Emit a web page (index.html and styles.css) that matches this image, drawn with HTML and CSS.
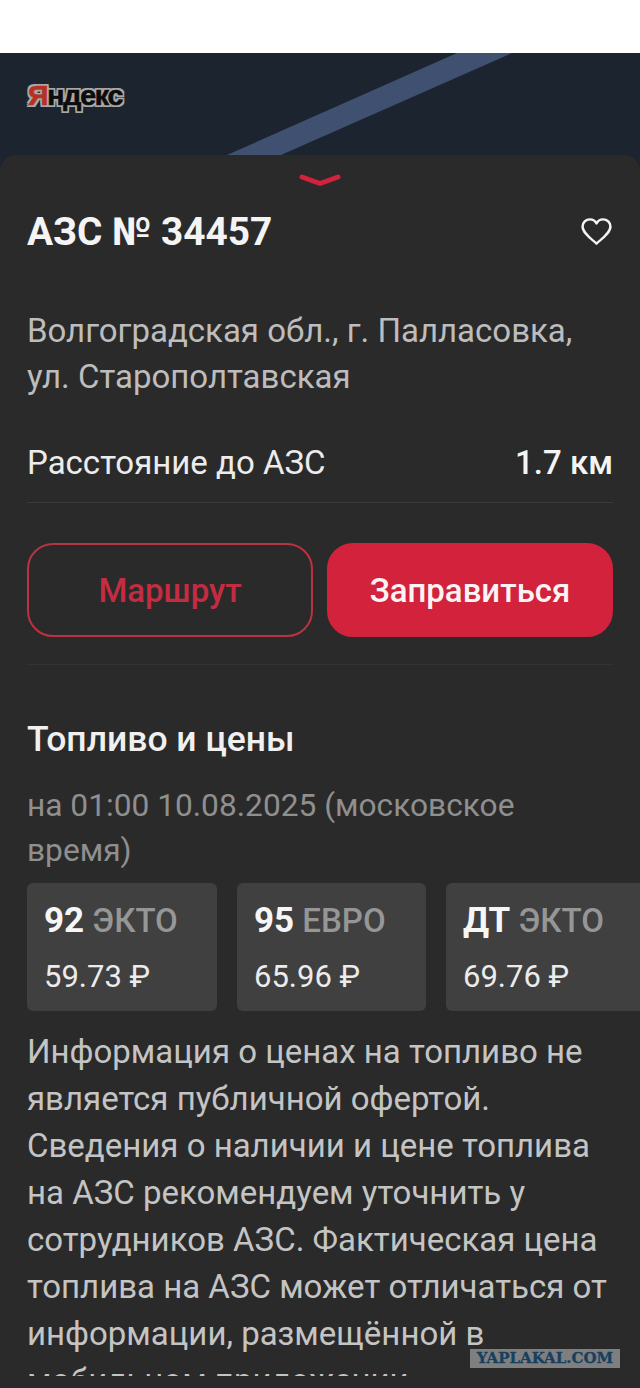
FILE: index.html
```html
<!DOCTYPE html>
<html lang="ru">
<head>
<meta charset="utf-8">
<title>АЗС № 34457</title>
<link rel="stylesheet" href="styles.css">
</head>
<body>
<div class="screen">
  <div class="topbar"></div>
  <header class="hero">
    <svg class="stripe" viewBox="0 0 640 102" width="640" height="102" aria-hidden="true"><polygon points="227,102 281,102 512,0 457,0" fill="#3f5070"/></svg>
    <div class="logo"><span class="logo-y">Я</span>ндекс</div>
  </header>
  <main class="sheet">
    <svg class="handle" width="42" height="14" viewBox="0 0 42 14" aria-hidden="true"><path d="M3 3 L21 9.5 L39 3" fill="none" stroke="#d3223c" stroke-width="5" stroke-linecap="round" stroke-linejoin="round"/></svg>
    <div class="title-row">
      <h1 class="title">АЗС № 34457</h1>
      <svg class="heart" width="33" height="31" viewBox="0 0 32 32" preserveAspectRatio="none" aria-hidden="true"><path d="M16 28.5 C11 23.5 2.5 17.5 2.5 10.8 C2.5 6.5 5.8 3.5 9.5 3.5 C12.2 3.5 14.8 5 16 7.8 C17.2 5 19.8 3.5 22.5 3.5 C26.2 3.5 29.5 6.5 29.5 10.8 C29.5 17.5 21 23.5 16 28.5 Z" fill="none" stroke="#f4f4f4" stroke-width="2.4" stroke-linejoin="round"/></svg>
    </div>
    <p class="address">Волгоградская обл., г. Палласовка,<br>ул. Старополтавская</p>
    <div class="distance">
      <span>Расстояние до АЗС</span>
      <span class="distance-value">1.7 км</span>
    </div>
    <div class="actions">
      <button class="btn btn-outline">Маршрут</button>
      <button class="btn btn-solid">Заправиться</button>
    </div>
    <section class="fuel">
      <h2 class="fuel-title">Топливо и цены</h2>
      <p class="fuel-date">на 01:00 10.08.2025 (московское время)</p>
      <div class="cards">
        <div class="card card-a">
          <div class="card-name"><b>92</b> ЭКТО</div>
          <div class="card-price">59.73 ₽</div>
        </div>
        <div class="card card-b">
          <div class="card-name"><b>95</b> ЕВРО</div>
          <div class="card-price">65.96 ₽</div>
        </div>
        <div class="card card-c">
          <div class="card-name"><b>ДТ</b> ЭКТО</div>
          <div class="card-price">69.76 ₽</div>
        </div>
      </div>
      <p class="notice">Информация о ценах на топливо не является публичной офертой. Сведения о наличии и цене топлива на АЗС рекомендуем уточнить у сотрудников АЗС. Фактическая цена топлива на АЗС может отличаться от информации, размещённой в мобильном приложении.</p>
    </section>
  </main>
  <div class="bottom-mask"></div>
  <div class="watermark">YAPLAKAL.COM</div>
</div>
</body>
</html>
```
FILE: styles.css
```css
* { box-sizing: border-box; }
html, body { margin: 0; padding: 0; background: #2a2a2a; }
.screen {
  position: relative;
  width: 640px;
  height: 1388px;
  overflow: hidden;
  background: #fff;
  font-family: Roboto, "Noto Sans", sans-serif;
  display: flex;
  flex-direction: column;
}
.topbar { height: 53px; flex: none; background: #fff; }
.hero {
  position: relative;
  height: 118px;
  flex: none;
  background: #1c2430;
  padding: 25px 0 0 28px;
}
.stripe { position: absolute; left: 0; top: 0; }
.logo {
  position: relative;
  font-family: "Liberation Sans", sans-serif;
  font-weight: 700;
  font-size: 28.5px;
  line-height: 34px;
  letter-spacing: -1.2px;
  color: #0c0c0c;
  -webkit-text-stroke: 0.7px #0c0c0c;
  text-shadow: 2px 2px 0 #a8a8a8, -2px -2px 0 #a8a8a8, 2px -2px 0 #a8a8a8, -2px 2px 0 #a8a8a8, 2px 0 0 #a8a8a8, -2px 0 0 #a8a8a8, 0 2px 0 #a8a8a8, 0 -2px 0 #a8a8a8;
}
.logo-y { color: #b8301f; -webkit-text-stroke-color: #b8301f; }
.sheet {
  position: relative;
  flex: 1;
  margin-top: -16px;
  background: #2a2a2a;
  border-radius: 16px 16px 0 0;
  padding: 0 27px;
  min-height: 0;
}
.handle { display: block; margin: 19px auto 0; }
.title-row {
  display: flex;
  justify-content: space-between;
  align-items: center;
  margin-top: 20px;
  height: 48px;
}
.title {
  margin: 0;
  font-size: 38.8px;
  line-height: 48px;
  font-weight: 700;
  color: #f4f4f4;
}
.heart { flex: none; margin-bottom: 2px; }
.address {
  margin: 52px 0 0;
  font-size: 33px;
  line-height: 46px;
  color: #bdbdbd;
}
.distance {
  display: flex;
  justify-content: space-between;
  align-items: center;
  margin-top: 37px;
  padding-bottom: 14px;
  height: 66px;
  border-bottom: 1px solid #3a3a3a;
  font-size: 33px;
  line-height: 46px;
  color: #ececec;
}
.distance-value { font-weight: 500; color: #f4f4f4; }
.actions {
  display: flex;
  gap: 14px;
  margin-top: 40px;
  padding-bottom: 27px;
  border-bottom: 1px solid #323232;
}
.btn {
  flex: 1;
  height: 94px;
  border-radius: 26px;
  font-family: inherit;
  font-size: 33px;
  font-weight: 500;
  padding: 0;
}
.btn-outline { background: transparent; border: 2px solid #bb3240; color: #c42c41; }
.btn-solid { background: #d3223c; border: 2px solid #d3223c; color: #fbf3f4; }
.fuel { margin-top: 51px; }
.fuel-title {
  margin: 0;
  font-size: 35.5px;
  line-height: 46px;
  font-weight: 500;
  color: #f0f0f0;
}
.fuel-date {
  margin: 21px 0 0;
  font-size: 31.7px;
  line-height: 45px;
  color: #8f8f8f;
}
.cards {
  display: flex;
  gap: 20px;
  margin-top: 10px;
  width: 640px;
}
.card {
  flex: none;
  height: 128px;
  background: #404040;
  border-radius: 6px;
  padding: 17px 0 0 17px;
}
.card-a { width: 190px; }
.card-b { width: 189px; }
.card-c { width: 210px; }
.card-name {
  font-size: 33px;
  line-height: 42px;
  font-weight: 500;
  color: #969696;
}
.card-name b { font-size: 35px; font-weight: 700; color: #f6f6f6; }
.card-price {
  margin-top: 16px;
  font-size: 31px;
  line-height: 38px;
  color: #ececec;
}
.notice {
  margin: 17px 0 0;
  font-size: 33px;
  line-height: 47px;
  color: #c4c4c4;
}
.bottom-mask {
  position: absolute;
  left: 0;
  right: 0;
  bottom: 0;
  height: 12px;
  background: #2a2a2a;
}
.watermark {
  position: absolute;
  left: 470px;
  top: 1349px;
  width: 150px;
  height: 19px;
  background: #7f7f7f;
  color: #17405f;
  font-family: "DejaVu Serif", serif;
  font-weight: 700;
  font-size: 15px;
  -webkit-text-stroke: 0.3px #17405f;
  line-height: 19px;
  text-align: center;
  white-space: nowrap;
}
```
